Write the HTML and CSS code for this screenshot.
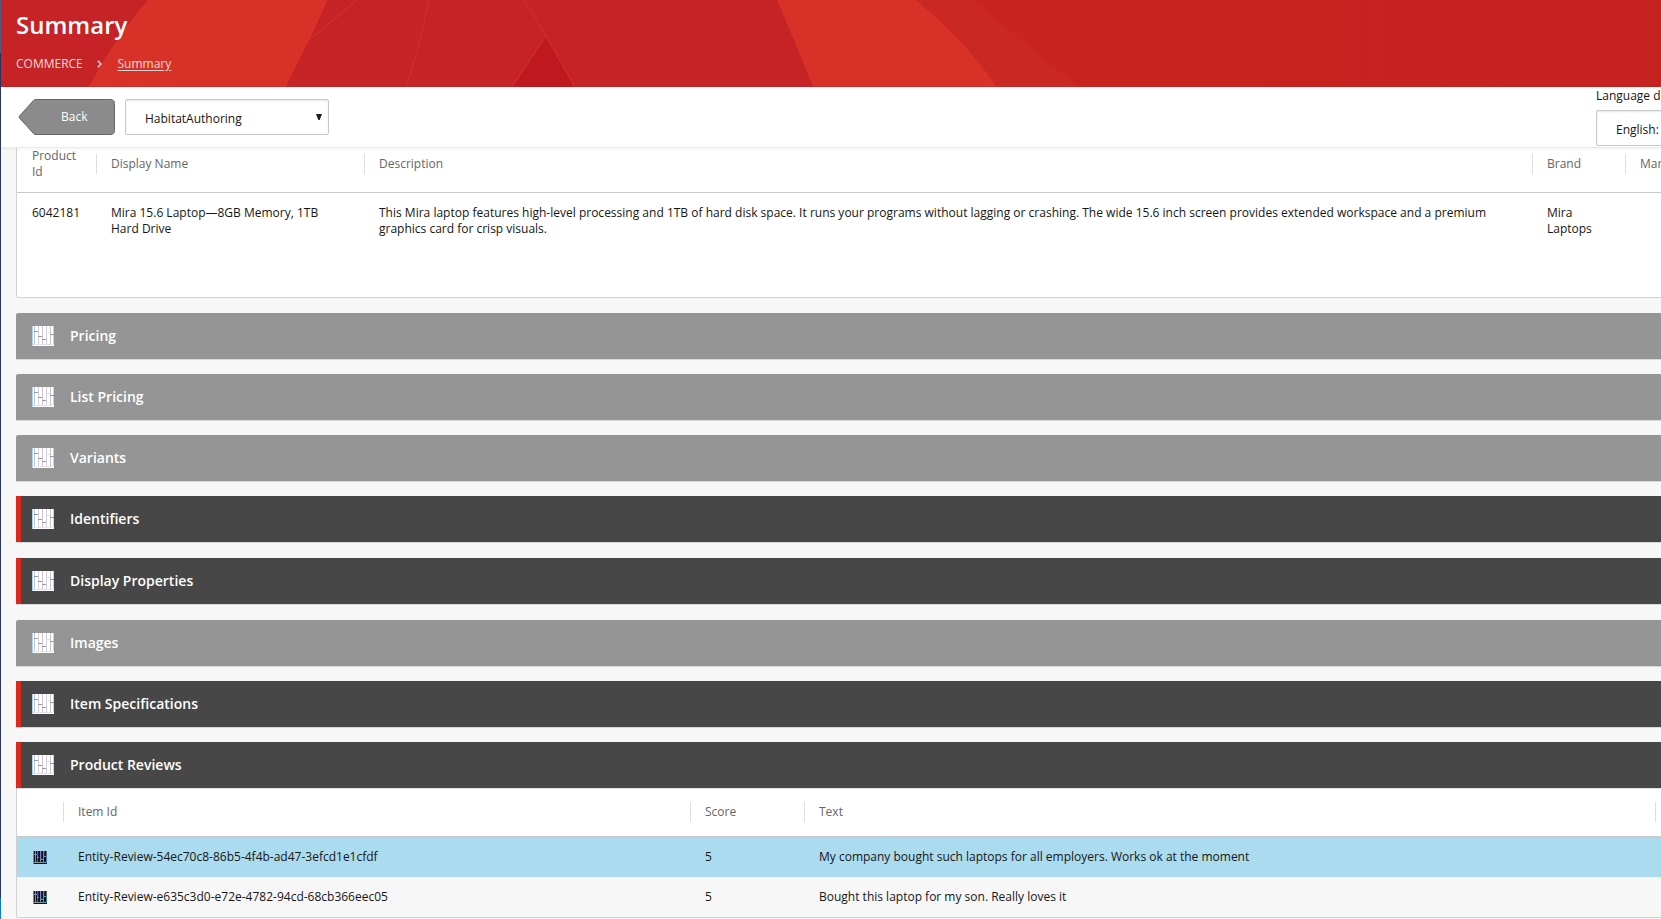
FILE: index.html
```html
<!DOCTYPE html>
<html lang="en">
<head>
<meta charset="utf-8">
<title>Summary</title>
<link rel="stylesheet" href="styles.css">
</head>
<body>
<svg class="defs" width="0" height="0" aria-hidden="true">
  <symbol id="planks" viewBox="0 0 22 20">
    <rect width="22" height="20" fill="#fff"/>
    <path d="M.5 0V20" stroke="#a9d4f5"/>
    <path d="M2.500 0V18M10.500 0V18M18.500 0V18" stroke="#c9c2de"/>
    <path d="M6.500 0V18M14.500 0V18" stroke="#d9cfd6"/>
    <path d="M21.500 0V18" stroke="#e3c9c4"/>
    <path d="M1 18.500H21" stroke="#e4e4e4"/>
    <path d="M2 5.500H6M6 10.500H10M10 13.500H14M18 8.500H22" stroke="#999"/>
    <path d="M14 6.500H18" stroke="#dedede"/>
  </symbol>
  <symbol id="planks-dark" viewBox="0 0 14 13">
    <rect width="14" height="13" fill="#141420"/>
    <path d="M.5 0V13" stroke="#8f8a52"/>
    <path d="M2.500 0V11" stroke="#5f9c86"/>
    <path d="M4.500 0V11" stroke="#4a7a58"/>
    <path d="M5.500 0V6" stroke="#23188a"/>
    <path d="M7.500 0V11" stroke="#6b8fa6"/>
    <path d="M8.500 0V8" stroke="#5c1a22"/>
    <path d="M10.500 0V11" stroke="#7a8790"/>
    <path d="M11.500 0V5" stroke="#6a1420"/>
    <path d="M1 3.500H4M4 6.500H6M7 8.500H10M11 5.500H14M1 11.500H13" stroke="#83939c"/>
    <path d="M13.500 0V12" stroke="#2a78b0"/>
  </symbol>
</svg>
<div class="edge"></div>
<div class="page">
  <header class="banner">
    <svg class="banner-art" width="1660" height="87" viewBox="1 0 1660 87" aria-hidden="true">
      <defs><linearGradient id="fade"><stop offset="0" stop-color="#c92420"/><stop offset="1" stop-color="#c5221f"/></linearGradient></defs>
      <rect x="1" width="920" height="87" fill="#c52325"/>
      <rect x="900" width="761" height="87" fill="url(#fade)"/>
      <path d="M915 0H972L1080 87H996Z" fill="#c92823"/>
      <path d="M148 0H327L308 41L285 87H88.500Q117 35 148 0Z" fill="#d83128"/>
      <path d="M546 36L575 87H512Z" fill="#bf191f"/>
      <path d="M357 0L308 41M429 0Q417 55 406 87M524 0L546 36L575 87M546 36L512 87" fill="none" stroke="#cc3028" stroke-width="1.300"/>
      <path d="M778 0H915Q968 44 996 87H814Z" fill="#d83128"/>
      <path d="M778 0L814 87M915 0Q968 44 996 87M327 0L308 41L285 87" fill="none" stroke="#e03529"/>
    </svg>
    <div class="banner-text">
      <h1 class="title">Summary</h1>
      <nav class="crumbs">
        <span class="crumb-root">COMMERCE</span>
        <svg class="crumb-arrow" width="5" height="8" viewBox="0 0 5 8"><path d="M.8.8L4 4L.8 7.200" fill="none" stroke="#f9dcdc" stroke-width="1.400"/></svg>
        <a class="crumb-here">Summary</a>
      </nav>
    </div>
  </header>

  <div class="toolbar">
    <div class="back">
      <svg class="back-shape" width="98" height="38" viewBox="0 0 98 38" aria-hidden="true">
        <path d="M18 1.500H92Q96.500 1.500 96.500 5.500V32.500Q96.500 36.500 92 36.500H18Q16.500 36.500 15.500 35.500L1.500 20Q.6 19 1.500 18L15.500 2.500Q16.500 1.500 18 1.500Z" fill="#8b8b8b" stroke="#666"/>
      </svg>
      <span class="back-label">Back</span>
    </div>
    <div class="select env">
      <span class="select-text">HabitatAuthoring</span>
      <svg class="caret" width="6" height="6" viewBox="0 0 6 6"><path d="M0 0H6L3.600 6H2.400Z" fill="#1c1c1c"/></svg>
    </div>
    <div class="language">
      <span class="language-label">Language d</span>
      <div class="select lang"><span class="select-text">English:</span></div>
    </div>
  </div>

  <main class="content">
    <section class="grid product">
      <div class="row head">
        <div class="cell">Product<br>Id</div>
        <div class="cell ruled">Display Name</div>
        <div class="cell ruled">Description</div>
        <div class="cell ruled">Brand</div>
        <div class="cell ruled">Mar</div>
      </div>
      <div class="row body">
        <div class="cell">6042181</div>
        <div class="cell">Mira 15.6 Laptop—8GB Memory, 1TB<br>Hard Drive</div>
        <div class="cell"><span class="desc">This Mira laptop features high-level processing and 1TB of hard disk space. It runs your programs without lagging or crashing. The wide 15.6 inch screen provides extended workspace and a premium</span><br>graphics card for crisp visuals.</div>
        <div class="cell">Mira<br>Laptops</div>
        <div class="cell"></div>
      </div>
    </section>

    <div class="bars">
      <div class="bar"><svg class="bar-icon"><use href="#planks"/></svg>Pricing</div>
      <div class="bar"><svg class="bar-icon"><use href="#planks"/></svg>List Pricing</div>
      <div class="bar"><svg class="bar-icon"><use href="#planks"/></svg>Variants</div>
      <div class="bar open"><svg class="bar-icon"><use href="#planks"/></svg>Identifiers</div>
      <div class="bar open spaced"><svg class="bar-icon"><use href="#planks"/></svg>Display Properties</div>
      <div class="bar spaced"><svg class="bar-icon"><use href="#planks"/></svg>Images</div>
      <div class="bar open"><svg class="bar-icon"><use href="#planks"/></svg>Item Specifications</div>
      <div class="bar open"><svg class="bar-icon"><use href="#planks"/></svg>Product Reviews</div>
    </div>

    <section class="grid reviews">
      <div class="row head">
        <div class="cell"></div>
        <div class="cell ruled">Item Id</div>
        <div class="cell ruled">Score</div>
        <div class="cell ruled">Text</div>
        <div class="cell ruled"></div>
      </div>
      <div class="row selected">
        <div class="cell"><svg class="row-icon"><use href="#planks-dark"/></svg></div>
        <div class="cell">Entity-Review-54ec70c8-86b5-4f4b-ad47-3efcd1e1cfdf</div>
        <div class="cell">5</div>
        <div class="cell">My company bought such laptops for all employers. Works ok at the moment</div>
      </div>
      <div class="row">
        <div class="cell"><svg class="row-icon"><use href="#planks-dark"/></svg></div>
        <div class="cell">Entity-Review-e635c3d0-e72e-4782-94cd-68cb366eec05</div>
        <div class="cell">5</div>
        <div class="cell">Bought this laptop for my son. Really loves it</div>
      </div>
    </section>
  </main>
</div>
</body>
</html>
```
FILE: styles.css
```css
* { box-sizing: border-box; }

body {
  margin: 0;
  width: 1661px;
  height: 919px;
  overflow: hidden;
  display: flex;
  background: #f7f7f7;
  color: #161616;
  font: 12px/16px "Open Sans", "Noto Sans", sans-serif;
}

.defs { position: absolute; }

.edge {
  flex: none;
  width: 1px;
  background: linear-gradient(#4a5d8c 0 53px, #28345f 53px 898px, #0a7bd6 898px);
}

.page { flex: none; width: 1660px; height: 919px; overflow: hidden; }

/* Banner */
.banner { position: relative; height: 87px; background: #c52325; color: #fff; }
.banner-art { position: absolute; left: 0; top: 0; }
.banner-text { position: relative; padding: 9px 0 0 15px; }
.title { margin: 0; font-size: 24px; line-height: 32px; font-weight: 600; }
.crumbs { display: flex; align-items: center; margin-top: 15px; color: #fadada; white-space: nowrap; }
.crumb-root { width: 81px; }
.crumb-arrow { margin-right: 15.500px; }
.crumb-here { text-decoration: underline; text-underline-offset: 2px; }

/* Toolbar */
.toolbar {
  position: relative;
  display: flex;
  align-items: flex-start;
  height: 61px;
  padding-left: 17px;
  background: #fff;
  border-bottom: 1px solid #eaeaea;
  box-shadow: 0 1px 3px rgba(0, 0, 0, .06);
}
.back { position: relative; width: 98px; height: 38px; margin: 11px 9px 0 0; color: #fff; }
.back-shape { position: absolute; left: 0; top: 0; }
.back-label { position: relative; display: block; padding: 11px 0 0 43px; }
.select {
  display: flex;
  height: 36px;
  border: 1px solid #c9c9c9;
  border-radius: 2px;
  background: #fff;
  box-shadow: inset 0 1px 2px rgba(0, 0, 0, .1);
}
.env { width: 204px; margin-top: 12px; justify-content: space-between; padding: 11px 6px 0 19px; }
.select-text { height: 15px; overflow: hidden; white-space: nowrap; }
.caret { margin-top: 3px; }
.language { margin: 0 0 0 auto; width: 65px; white-space: nowrap; }
.language-label { display: block; padding-top: 1px; height: 23px; }
.lang { width: 120px; padding: 11px 0 0 19px; }

/* Data grids */
.content { padding-left: 15px; }
.grid { background: #fff; border: 1px solid #d2d2d2; border-right: 0; white-space: nowrap; }
.row { display: grid; }
.cell { min-width: 0; }
.product { height: 150px; border-top: 0; border-radius: 0 0 0 2px; }
.product .row { grid-template-columns: 79px 268px 1168px 93px 1fr; }
.product .cell { padding-left: 15px; }
.product .head { height: 45px; align-items: center; padding-bottom: 13px; border-bottom: 1px solid #c8c8c8; color: #666; }
.product .body { padding-top: 12px; }
.desc { letter-spacing: .006px; }
.ruled { position: relative; }
.ruled::before {
  content: "";
  position: absolute;
  left: 0;
  top: calc(50% - 10px);
  width: 1px;
  height: 20px;
  background: #dedede;
}

/* Section bars */
.bars { display: grid; row-gap: 15px; padding-top: 15px; }
.bar {
  display: flex;
  align-items: center;
  height: 46px;
  padding-left: 16px;
  background: #959595;
  color: #fff;
  font-size: 14px;
  font-weight: 600;
  box-shadow: 0 1px 0 rgba(0, 0, 0, .12);
  border-radius: 2px 0 0 0;
}
.bar.open { background: #474747; border-left: 5px solid #dc291e; padding-left: 11px; border-radius: 0; }
.bar.spaced { margin-top: 1px; }
.bar-icon { width: 22px; height: 20px; margin-right: 16px; }

.reviews { border-top: 0; background: #f7f7f7; border-radius: 0 0 0 2px; }
.reviews .row { grid-template-columns: 46px 627px 114px 851px 1fr; height: 40px; align-items: center; }
.reviews .head { height: 49px; background: #fff; border-bottom: 1px solid #c8c8c8; color: #666; }
.reviews .head .cell { min-height: 16px; }
.reviews .cell { padding-left: 15px; }
.reviews .selected { background: #abdbee; }
.row-icon { display: block; width: 14px; height: 13px; margin-left: 1px; }
```
